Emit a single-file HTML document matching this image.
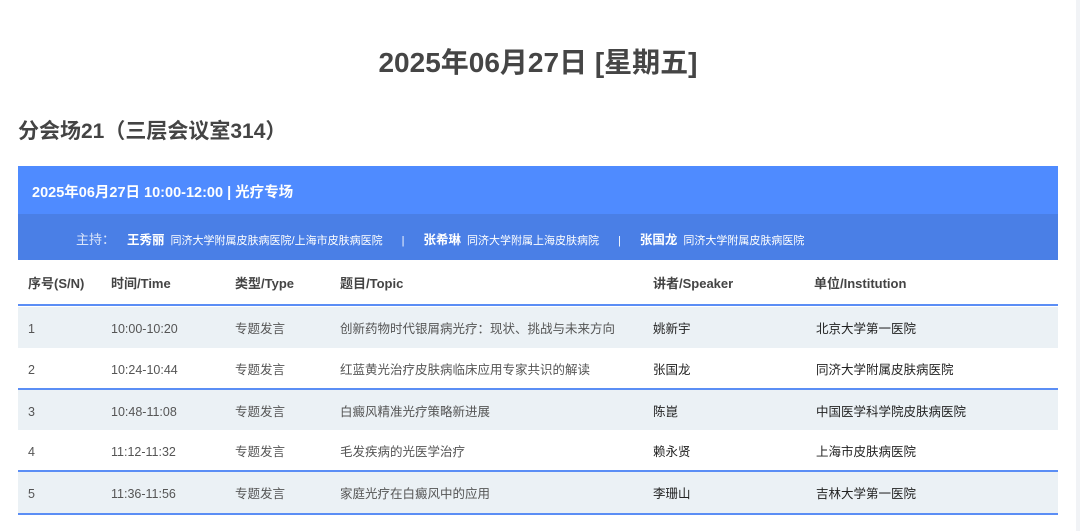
<!DOCTYPE html>
<html><head><meta charset="utf-8"><style>
*{margin:0;padding:0;box-sizing:border-box}
body{width:1080px;height:531px;background:#fff;font-family:"Liberation Sans","Noto Sans CJK SC",sans-serif;color:#444;position:relative;overflow:hidden}
.rs{position:absolute;right:0;top:0;width:4px;height:531px;background:#f1f3f6}
h1{position:absolute;top:45px;left:0;width:1076px;text-align:center;font-size:28px;line-height:36px;font-weight:bold;color:#454545}
h2{position:absolute;top:118px;left:18px;font-size:21px;line-height:28px;font-weight:bold;color:#444}
.b1{position:absolute;left:18px;top:166px;width:1040px;height:48px;background:#4f8bff;color:#fff;font-weight:bold;font-size:14.5px;line-height:20px;padding:17px 0 0 14px}
.b2{position:absolute;left:18px;top:214px;width:1040px;height:46px;background:#4a7fe6;color:#fff;font-size:11px;line-height:18px;padding:17px 0 0 58px;white-space:nowrap}
.b2 .l{font-size:13px;opacity:.8;margin-right:12px}
.b2 b{font-size:12.5px;margin-right:6px}
.b2 .s{margin:0 19px}
.row{position:absolute;left:18px;width:1040px;font-size:12.5px;line-height:18px;color:#555}
.row span{position:absolute;top:0;line-height:18px}
.hd{top:260px;height:46px;font-weight:bold;font-size:13px;color:#444;border-bottom:2px solid #5b8ef5}
.hd span{top:15px}
.d{height:41px}
.d span{top:13px}
.g{background:#ebf1f5}
.bl{border-bottom:2px solid #5b8ef5}
.c1{left:10px}.c2{left:93px}.c3{left:217px}.c4{left:322px}.c5{left:635px;color:#222}.c6{left:798px;color:#222}
.hd .c5,.hd .c6{color:#444}.hd .c6{left:796px}
</style></head><body>
<div class="rs"></div>
<h1>2025年06月27日 [星期五]</h1>
<h2>分会场21（三层会议室314）</h2>
<div class="b1">2025年06月27日 10:00-12:00 | 光疗专场</div>
<div class="b2"><span class="l">主持：</span><b>王秀丽</b>同济大学附属皮肤病医院/上海市皮肤病医院<span class="s">|</span><b>张希琳</b>同济大学附属上海皮肤病院<span class="s">|</span><b>张国龙</b>同济大学附属皮肤病医院</div>
<div class="row hd"><span class="c1">序号(S/N)</span><span class="c2">时间/Time</span><span class="c3">类型/Type</span><span class="c4">题目/Topic</span><span class="c5">讲者/Speaker</span><span class="c6">单位/Institution</span></div>
<div class="row d g" style="top:307px"><span class="c1">1</span><span class="c2">10:00-10:20</span><span class="c3">专题发言</span><span class="c4">创新药物时代银屑病光疗：现状、挑战与未来方向</span><span class="c5">姚新宇</span><span class="c6">北京大学第一医院</span></div>
<div class="row d bl" style="top:348px;height:42px"><span class="c1">2</span><span class="c2">10:24-10:44</span><span class="c3">专题发言</span><span class="c4">红蓝黄光治疗皮肤病临床应用专家共识的解读</span><span class="c5">张国龙</span><span class="c6">同济大学附属皮肤病医院</span></div>
<div class="row d g" style="top:390px;height:40px"><span class="c1">3</span><span class="c2">10:48-11:08</span><span class="c3">专题发言</span><span class="c4">白癜风精准光疗策略新进展</span><span class="c5">陈崑</span><span class="c6">中国医学科学院皮肤病医院</span></div>
<div class="row d bl" style="top:430px;height:42px"><span class="c1">4</span><span class="c2">11:12-11:32</span><span class="c3">专题发言</span><span class="c4">毛发疾病的光医学治疗</span><span class="c5">赖永贤</span><span class="c6">上海市皮肤病医院</span></div>
<div class="row d g bl" style="top:472px;height:43px"><span class="c1">5</span><span class="c2">11:36-11:56</span><span class="c3">专题发言</span><span class="c4">家庭光疗在白癜风中的应用</span><span class="c5">李珊山</span><span class="c6">吉林大学第一医院</span></div>
</body></html>
